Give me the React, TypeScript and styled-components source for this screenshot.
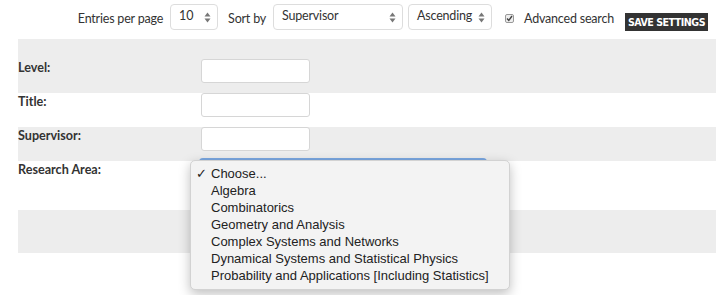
import React from "react";
import styled, { createGlobalStyle } from "styled-components";

const GlobalStyle = createGlobalStyle`
  html, body {
    margin: 0;
    padding: 0;
    background: #fff;
  }
  body {
    font-family: "Lato", "Open Sans", sans-serif;
    color: #333;
  }
`;

const Page = styled.div`
  position: relative;
  width: 716px;
  height: 295px;
  overflow: hidden;
`;

const Toolbar = styled.div`
  display: flex;
  align-items: flex-start;
  justify-content: flex-end;
  height: 39px;
  box-sizing: border-box;
  padding: 4px 8px 0 0;
  font-size: 12.5px;
  letter-spacing: -0.2px;
`;

const ToolLabel = styled.span<{ $ml?: number }>`
  margin: 7px 0 0 ${(p) => p.$ml ?? 0}px;
  line-height: 16px;
`;

const FakeSelect = styled.div<{ $w: number; $ml: number }>`
  display: flex;
  align-items: center;
  justify-content: space-between;
  box-sizing: border-box;
  width: ${(p) => p.$w}px;
  height: 26px;
  margin-left: ${(p) => p.$ml}px;
  padding: 0 6px 3px 8px;
  border: 1px solid #ddd;
  border-radius: 4px;
  background: #fff;
  font-size: 12.5px;
  letter-spacing: -0.2px;
  color: #333;
`;

const Arrows = () => (
  <svg width="7" height="11" viewBox="0 0 7 11" style={{ marginTop: 3, flexShrink: 0 }}>
    <path d="M3.5 0.5 L6.5 4.5 H0.5 Z" fill="#777" />
    <path d="M3.5 10.5 L6.5 6.5 H0.5 Z" fill="#777" />
  </svg>
);

const Check = styled.span`
  display: inline-flex;
  align-items: center;
  justify-content: center;
  box-sizing: border-box;
  width: 9px;
  height: 9px;
  margin: 10px 10px 0 13px;
  border: 1px solid #999;
  border-radius: 2px;
  background: #eee;
`;

const SaveButton = styled.button`
  box-sizing: border-box;
  width: 83px;
  height: 18px;
  margin: 9px 0 0 11px;
  padding: 0;
  border: none;
  background: #333;
  color: #fff;
  font-family: "DejaVu Sans Condensed", "DejaVu Sans", sans-serif;
  font-weight: bold;
  font-size: 10.6px;
  letter-spacing: -0.5px;
  white-space: nowrap;
`;

const Form = styled.div`
  margin-left: 18px;
`;

const Row = styled.div<{ $shade?: boolean; $h: number; $top?: number }>`
  display: flex;
  align-items: flex-start;
  box-sizing: border-box;
  height: ${(p) => p.$h}px;
  padding-top: ${(p) => p.$top ?? 0}px;
  background: ${(p) => (p.$shade ? "#ededed" : "#fff")};
`;

const Label = styled.label`
  width: 183px;
  margin-top: 1px;
  font-family: "Lato", sans-serif;
  font-weight: bold;
  font-size: 12.6px;
  color: #333;
`;

const TextInput = styled.input`
  box-sizing: border-box;
  width: 109px;
  height: 24px;
  border: 1px solid #d6d6d6;
  border-radius: 3px;
  background: #fff;
`;

const AreaSelect = styled.div`
  box-sizing: border-box;
  width: 288px;
  height: 26px;
  margin: -3px 0 0 -2px;
  border: 2px solid #7aa7e0;
  border-radius: 4px;
  background: #fff;
`;

const Menu = styled.div`
  position: absolute;
  left: 190px;
  top: 160px;
  width: 320px;
  box-sizing: border-box;
  padding: 4px 0 5px;
  border-radius: 5px;
  background: #f3f3f3;
  border: 1px solid #d2d2d2;
  box-shadow: 0 4px 12px rgba(0, 0, 0, 0.25);
  font-family: "Liberation Sans", Arial, sans-serif;
  font-size: 13px;
  color: #222;
`;

const MenuItem = styled.div`
  position: relative;
  height: 17px;
  line-height: 17px;
  padding-left: 20px;
  white-space: nowrap;
`;

const Tick = styled.span`
  position: absolute;
  left: 5px;
  top: 0;
`;

const areas = [
  "Choose...",
  "Algebra",
  "Combinatorics",
  "Geometry and Analysis",
  "Complex Systems and Networks",
  "Dynamical Systems and Statistical Physics",
  "Probability and Applications [Including Statistics]",
];

export default function App() {
  return (
    <Page>
      <GlobalStyle />
      <Toolbar>
        <ToolLabel>Entries per page</ToolLabel>
        <FakeSelect $w={48} $ml={7}>
          10 <Arrows />
        </FakeSelect>
        <ToolLabel $ml={10}>Sort by</ToolLabel>
        <FakeSelect $w={130} $ml={7}>
          Supervisor <Arrows />
        </FakeSelect>
        <FakeSelect $w={84} $ml={5}>
          Ascending <Arrows />
        </FakeSelect>
        <Check>
          <svg width="7" height="7" viewBox="0 0 7 7">
            <path d="M1 3.5 L2.8 5.5 L6 1" stroke="#444" strokeWidth="1.4" fill="none" />
          </svg>
        </Check>
        <ToolLabel>Advanced search</ToolLabel>
        <SaveButton>SAVE SETTINGS</SaveButton>
      </Toolbar>
      <Form>
        <Row $shade $h={54} $top={20}>
          <Label>Level:</Label>
          <TextInput />
        </Row>
        <Row $h={34}>
          <Label>Title:</Label>
          <TextInput />
        </Row>
        <Row $shade $h={34}>
          <Label>Supervisor:</Label>
          <TextInput />
        </Row>
        <Row $h={49}>
          <Label>Research Area:</Label>
          <AreaSelect />
        </Row>
        <Row $shade $h={43} />
      </Form>
      <Menu>
        {areas.map((a, i) => (
          <MenuItem key={a}>
            {i === 0 && <Tick>✓</Tick>}
            {a}
          </MenuItem>
        ))}
      </Menu>
    </Page>
  );
}
